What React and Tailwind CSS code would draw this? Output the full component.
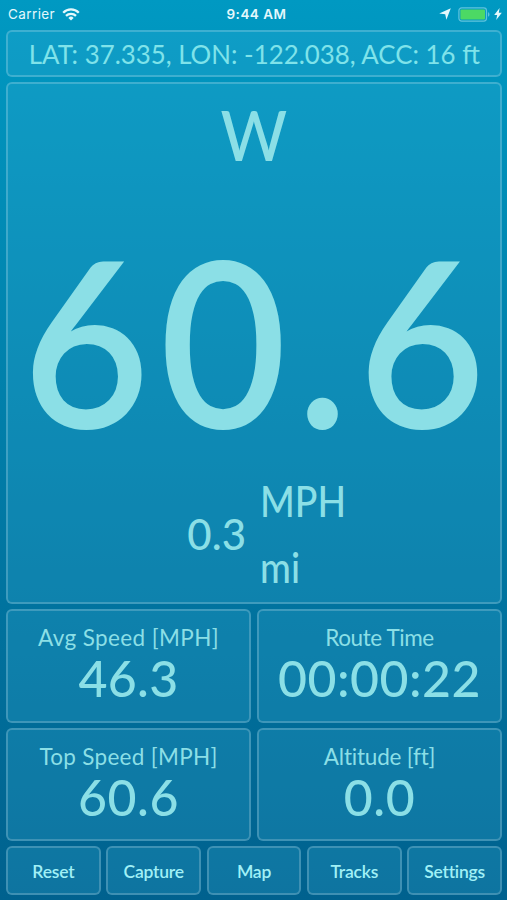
const stats = [
    { label: 'Avg Speed [MPH]', value: '46.3', labelClass: 'tracking-[0.4px]', valueClass: 'tracking-[0.3px]' },
    { label: 'Route Time', value: '00:00:22', labelClass: 'tracking-[-0.4px]', valueClass: 'tracking-[0.5px]' },
    { label: 'Top Speed [MPH]', value: '60.6', labelClass: 'tracking-[0.3px]', valueClass: 'tracking-[0.5px]' },
    { label: 'Altitude [ft]', value: '0.0', labelClass: 'tracking-[-0.2px]', valueClass: 'tracking-[0.5px]' },
];

const actions = ['Reset', 'Capture', 'Map', 'Tracks', 'Settings'];

function Panel({ className = '', children }) {
    return (
        <div className={`rounded-[6px] border-2 border-white/20 bg-[#38b0d8]/25 ${className}`}>
            {children}
        </div>
    );
}

function StatusBar() {
    return (
        <div className="grid h-[30px] grid-cols-3 items-center pt-[1px] pr-[5px] pl-[8px] font-[Inter,sans-serif] text-[13.5px] leading-[26px] text-[#e4f8fc]">
            <div className="flex h-[26px] items-center gap-[7px] self-start">
                <span className="tracking-[0.4px]">Carrier</span>
                <svg className="h-[13px] w-[18px]" viewBox="0 0 18 13" fill="none" stroke="currentColor" strokeWidth="2.3">
                    <path d="M1.2 4.7a11 11 0 0 1 15.6 0" />
                    <path d="M4 7.9a7 7 0 0 1 10 0" />
                    <path d="M9 12.6 6.4 9.9a3.7 3.7 0 0 1 5.2 0Z" fill="currentColor" stroke="none" />
                </svg>
            </div>
            <div className="h-[26px] self-start pl-[3px] text-center font-semibold tracking-[0.5px] whitespace-nowrap">9:44 AM</div>
            <div className="flex h-[26px] items-center justify-end self-start">
                <svg className="mr-[7px] h-[12px] w-[12px]" viewBox="0 0 12 12" fill="currentColor">
                    <path d="M11.8.2 7.4 11.8 6.2 6.3.2 5.4Z" />
                </svg>
                <svg className="mr-[3px] h-[15px] w-[33px]" viewBox="0 0 33 15">
                    <rect x=".9" y=".9" width="27.6" height="13.2" rx="2.8" fill="none" stroke="#5fc3dd" strokeWidth="1.2" />
                    <rect x="2.4" y="2.4" width="24.6" height="10.2" rx="1" fill="#4cd964" />
                    <path d="M30 5.3c2 .7 2 3.7 0 4.4Z" fill="#5fc3dd" />
                </svg>
                <svg className="h-[12px] w-[8px]" viewBox="0 0 8 12" fill="currentColor">
                    <path d="M5.6 0 .2 6.9h3L2.2 12 7.8 4.8h-3Z" />
                </svg>
            </div>
        </div>
    );
}

export default function App() {
    return (
        <div className="flex h-[900px] w-[507px] flex-col overflow-hidden bg-linear-to-b from-[#0099c2] to-[#00618e] font-[Lato,sans-serif] text-[#8bdfe6]">
            <StatusBar />

            <div className="flex flex-1 flex-col gap-[5px] pr-[5px] pb-[5px] pl-[6px]">
                <Panel className="h-[47px] text-center text-[26.5px] leading-[44px] whitespace-nowrap text-[#7fe3ea]">
                    <span className="inline-block scale-x-[0.975]">LAT: 37.335, LON: -122.038, ACC: 16 ft</span>
                </Panel>

                <Panel className="flex h-[522px] flex-col font-medium">
                    <div className="mt-[13px] h-[76px] text-center text-[69px] leading-[76px]">
                        <span className="inline-block scale-x-[0.93]">W</span>
                    </div>
                    <div className="mt-[41px] h-[250px] text-center text-[231px] leading-[250px] font-semibold whitespace-nowrap">
                        <span className="inline-block scale-x-[0.95] pl-[2px] tracking-[10.3px]">60.6</span>
                    </div>
                    {/* Distance sits between the two unit labels */}
                    <div className="mt-[5px] flex h-[130px] items-center text-[42px]">
                        <div className="w-[238px] text-right leading-[60px]">0.3</div>
                        <div className="ml-[14px] origin-left scale-x-[0.89] leading-[66px]">
                            <div>MPH</div>
                            <div>mi</div>
                        </div>
                    </div>
                </Panel>

                <div className="grid grid-cols-2 gap-x-[6px] gap-y-[5px]">
                    {stats.map((stat) => (
                        <Panel key={stat.label} className="h-[113.5px] pt-[12px] text-center whitespace-nowrap">
                            <div className={`text-[22.5px] leading-[30px] ${stat.labelClass}`}>{stat.label}</div>
                            <div className={`text-[50px] leading-[51px] font-medium ${stat.valueClass}`}>{stat.value}</div>
                        </Panel>
                    ))}
                </div>

                <div className="grid flex-1 grid-cols-5 gap-[5.5px]">
                    {actions.map((action) => (
                        <button
                            key={action}
                            type="button"
                            className="rounded-[6px] border-2 border-white/20 bg-[#38b0d8]/25 pt-[4px] text-[17.5px] font-semibold tracking-[-0.2px] text-[#a0f0f6]"
                        >
                            {action}
                        </button>
                    ))}
                </div>
            </div>
        </div>
    );
}
